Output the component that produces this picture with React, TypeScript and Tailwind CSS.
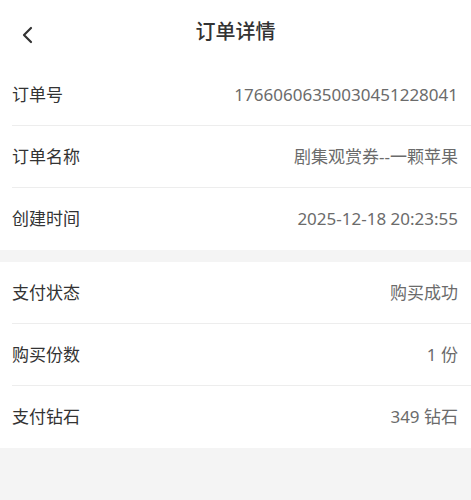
const sections = [
  [
    { label: '订单号', value: '17660606350030451228041' },
    { label: '订单名称', value: '剧集观赏券--一颗苹果' },
    { label: '创建时间', value: '2025-12-18 20:23:55' },
  ],
  [
    { label: '支付状态', value: '购买成功' },
    { label: '购买份数', value: '1 份' },
    { label: '支付钻石', value: '349 钻石' },
  ],
];

function Row({ label, value, last }: { label: string; value: string; last: boolean }) {
  return (
    <div className="pl-[12px]">
      <div
        className={`flex h-[62px] items-center justify-between pr-[13px] ${
          last ? '' : 'border-b border-[#ededed]'
        }`}
      >
        <span className="text-[17px] text-[#333333]">{label}</span>
        <span className="text-[17px] text-[#6b6b6b]">{value}</span>
      </div>
    </div>
  );
}

export default function App() {
  return (
    <div
      className="min-h-[500px] bg-[#f4f4f4]"
      style={{ fontFamily: '"Noto Sans", "Noto Sans CJK SC", sans-serif' }}
    >
      <div className="relative flex h-[64px] items-center justify-center bg-white">
        <button className="absolute left-[16px] top-[24px] flex h-[22px] w-[22px] items-center justify-center">
          <svg width="14" height="18" viewBox="0 0 14 18" fill="none">
            <path d="M11 2 L4 9 L11 16" stroke="#333333" strokeWidth="2.2" strokeLinecap="round" strokeLinejoin="round" />
          </svg>
        </button>
        <h1 className="text-[20px] font-medium text-[#333333]">订单详情</h1>
      </div>
      {sections.map((rows, i) => (
        <div key={i} className={`bg-white ${i > 0 ? 'mt-[12px]' : ''}`}>
          {rows.map((r, j) => (
            <Row key={r.label} label={r.label} value={r.value} last={j === rows.length - 1} />
          ))}
        </div>
      ))}
    </div>
  );
}
